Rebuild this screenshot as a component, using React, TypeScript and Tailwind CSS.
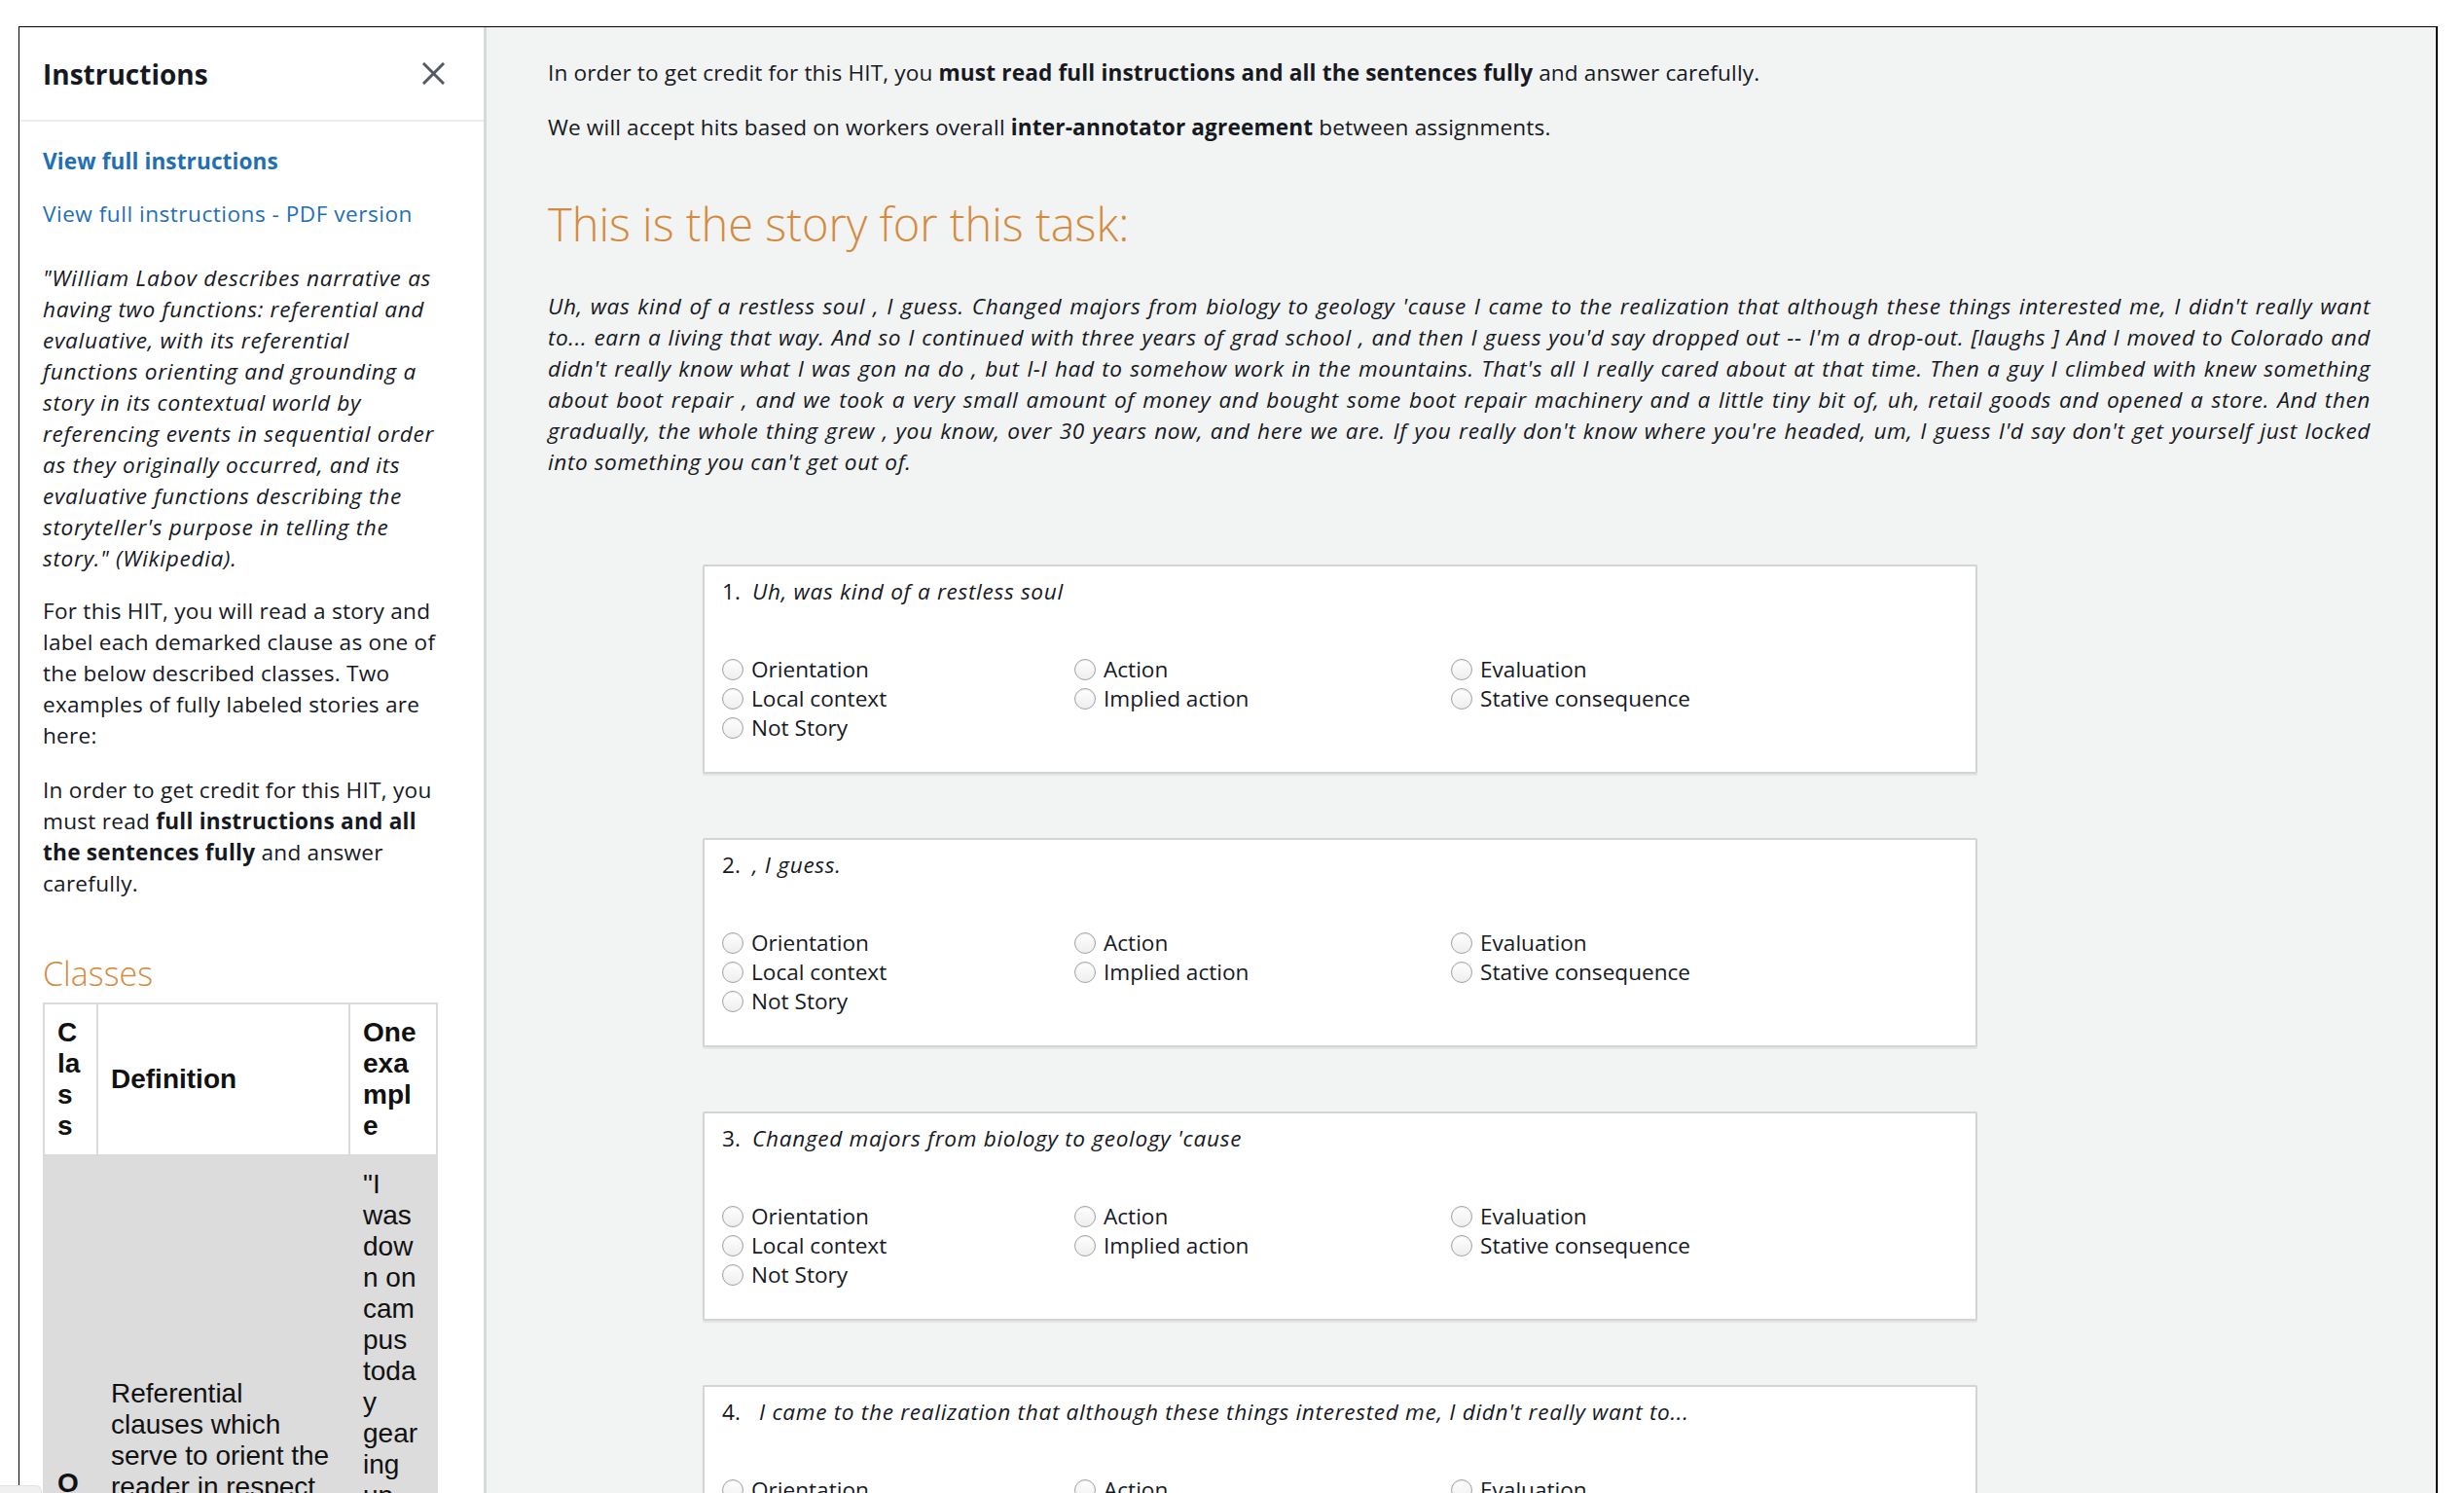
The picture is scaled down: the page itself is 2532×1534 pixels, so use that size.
import React from "react";

const storyLines = [
  "Uh, was kind of a restless soul , I guess. Changed majors from biology to geology 'cause I came to the realization that although these things interested me, I didn't really want",
  "to... earn a living that way. And so I continued with three years of grad school , and then I guess you'd say dropped out -- I'm a drop-out. [laughs ] And I moved to Colorado and",
  "didn't really know what I was gon na do , but I-I had to somehow work in the mountains. That's all I really cared about at that time. Then a guy I climbed with knew something",
  "about boot repair , and we took a very small amount of money and bought some boot repair machinery and a little tiny bit of, uh, retail goods and opened a store. And then",
  "gradually, the whole thing grew , you know, over 30 years now, and here we are. If you really don't know where you're headed, um, I guess I'd say don't get yourself just locked",
];

const questions = [
  { n: "1.", text: "Uh, was kind of a restless soul", shift: "ml-0" },
  { n: "2.", text: ", I guess.", shift: "ml-0" },
  { n: "3.", text: "Changed majors from biology to geology 'cause", shift: "ml-0" },
  {
    n: "4.",
    text: "I came to the realization that although these things interested me, I didn't really want to...",
    shift: "ml-[7px]",
  },
];

const options = [
  "Orientation",
  "Action",
  "Evaluation",
  "Local context",
  "Implied action",
  "Stative consequence",
  "Not Story",
];

function Radio({ label }: { label: string }) {
  return (
    <label className="flex h-[30px] items-center">
      <span className="h-[22px] w-[22px] shrink-0 rounded-full border border-[#a3a3a3] bg-gradient-to-b from-white to-[#eeeeee] shadow-[inset_0_1px_1px_rgba(0,0,0,0.08)]" />
      <span className="ml-[8px] whitespace-nowrap">{label}</span>
    </label>
  );
}

function QuestionCard({ n, text, shift }: { n: string; text: string; shift: string }) {
  return (
    <div className="h-[215px] rounded-[2px] border-2 border-[#d3d5d5] bg-white pl-[18px] pt-[10px] shadow-[0_2px_1px_rgba(0,0,0,0.06)]">
      <div className="flex h-[32px] items-center whitespace-nowrap">
        <span className="w-[31px] shrink-0">{n}</span>
        <span className={`italic tracking-[0.7px] ${shift}`}>{text}</span>
      </div>
      <div className="mt-[49px] grid grid-cols-[362px_387px_1fr]">
        {options.map((o) => (
          <Radio key={o} label={o} />
        ))}
      </div>
    </div>
  );
}

function CloseIcon() {
  return (
    <svg width="23" height="23" viewBox="0 0 23 23" fill="none" stroke="#545b64" strokeWidth="3" strokeLinecap="square">
      <line x1="2" y1="2" x2="21" y2="21" />
      <line x1="21" y1="2" x2="2" y2="21" />
    </svg>
  );
}

const exampleLines = ['"I', "was", "dow", "n on", "cam", "pus", "toda", "y", "gear", "ing", "up", "for", "the", "first", "day", "of", "class", "es."];

export default function App() {
  return (
    <div className="bg-white pl-[19px] pr-[27px] pt-[27px] font-['Open_Sans',sans-serif] text-[22.6px] leading-[32px] text-[#16191f]">
      <div className="flex min-h-[1700px] border border-r-2 border-black">
        {/* Side panel */}
        <aside className="w-[480px] shrink-0 border-r-[3px] border-[#d5dbdb] bg-white">
          <div className="flex h-[97px] items-center justify-between border-b-2 border-[#eaeded] pl-[24px] pr-[40px]">
            <h2 className="text-[28px] font-bold leading-[36px]">Instructions</h2>
            <CloseIcon />
          </div>
          <div className="whitespace-nowrap pl-[24px] pr-[49px] pt-[25px] tracking-[0.25px]">
            <a className="block font-bold tracking-[0.1px] text-[#1f6fb5]">View full instructions</a>
            <a className="mt-[22px] block tracking-[0.5px] text-[#1f6fb5]">View full instructions - PDF version</a>
            <p className="mt-[34px] italic tracking-[0.7px]">
              "William Labov describes narrative as<br />
              having two functions: referential and<br />
              evaluative, with its referential<br />
              functions orienting and grounding a<br />
              story in its contextual world by<br />
              referencing events in sequential order<br />
              as they originally occurred, and its<br />
              evaluative functions describing the<br />
              storyteller's purpose in telling the<br />
              story." (Wikipedia).
            </p>
            <p className="mt-[22px]">
              For this HIT, you will read a story and<br />
              label each demarked clause as one of<br />
              the below described classes. Two<br />
              examples of fully labeled stories are<br />
              here:
            </p>
            <p className="mt-[24px]">
              In order to get credit for this HIT, you<br />
              must read <b>full instructions and all</b>
              <br />
              <b>the sentences fully</b> and answer<br />
              carefully.
            </p>
            <h3 className="mt-[56px] text-[34px] font-light leading-[40px] tracking-normal text-[#d58b3e]">Classes</h3>
            <table className="mt-[10px] w-[404px] table-fixed border-collapse border-2 border-[#dadada] font-['Liberation_Sans',Arial,sans-serif] text-[28px] leading-[32px] tracking-normal text-[#111]">
              <colgroup>
                <col className="w-[55px]" />
                <col className="w-[259px]" />
                <col className="w-[90px]" />
              </colgroup>
              <thead>
                <tr className="bg-white">
                  <th className="border-2 border-[#dadada] px-[13px] py-[13px] text-left align-middle font-bold">
                    C<br />la<br />s<br />s
                  </th>
                  <th className="border-2 border-[#dadada] px-[13px] py-[13px] text-left align-middle font-bold">
                    Definition
                  </th>
                  <th className="border-2 border-[#dadada] px-[13px] py-[13px] text-left align-middle font-bold">
                    One<br />exa<br />mpl<br />e
                  </th>
                </tr>
              </thead>
              <tbody>
                <tr className="bg-[#dcdcdc]">
                  <td className="border-2 border-[#dcdcdc] px-[13px] pb-[13px] pt-[320px] align-top font-bold">
                    O<br />ri<br />e
                  </td>
                  <td className="border-2 border-[#dcdcdc] px-[13px] pb-[13px] pt-[228px] align-top">
                    Referential<br />clauses which<br />serve to orient the<br />reader in respect<br />to person, place,<br />time, and<br />behavioral<br />situation.
                  </td>
                  <td className="border-2 border-[#dcdcdc] px-[13px] py-[13px] align-top">
                    {exampleLines.map((l, i) => (
                      <div key={i}>{l}</div>
                    ))}
                  </td>
                </tr>
              </tbody>
            </table>
          </div>
        </aside>

        {/* Main */}
        <main className="flex-1 bg-[#f2f3f3] pl-[63px] pr-[67px] pt-[31px] tracking-[0.15px]">
          <p>
            In order to get credit for this HIT, you <b>must read full instructions and all the sentences fully</b> and answer carefully.
          </p>
          <p className="mt-[24px]">
            We will accept hits based on workers overall <b>inter-annotator agreement</b> between assignments.
          </p>
          <h1 className="mt-[55px] text-[47px] font-light leading-[56px] tracking-normal text-[#d58b3e]">This is the story for this task:</h1>
          <div className="mt-[41px] italic tracking-[0.6px]">
            {storyLines.map((l, i) => (
              <span key={i} className="block text-justify [text-align-last:justify]">
                {l}
              </span>
            ))}
            <span className="block">into something you can't get out of.</span>
          </div>
          <div className="ml-[159px] mt-[89px] flex w-[1310px] flex-col gap-[66px] tracking-normal">
            {questions.map((q) => (
              <QuestionCard key={q.n} n={q.n} text={q.text} shift={q.shift} />
            ))}
          </div>
        </main>
      </div>
      <div className="fixed bottom-0 left-0 h-[8px] w-[43px] rounded-tr-[6px] border-r border-t border-[#e2e2e2] bg-[#f0f0f0]" />
    </div>
  );
}
